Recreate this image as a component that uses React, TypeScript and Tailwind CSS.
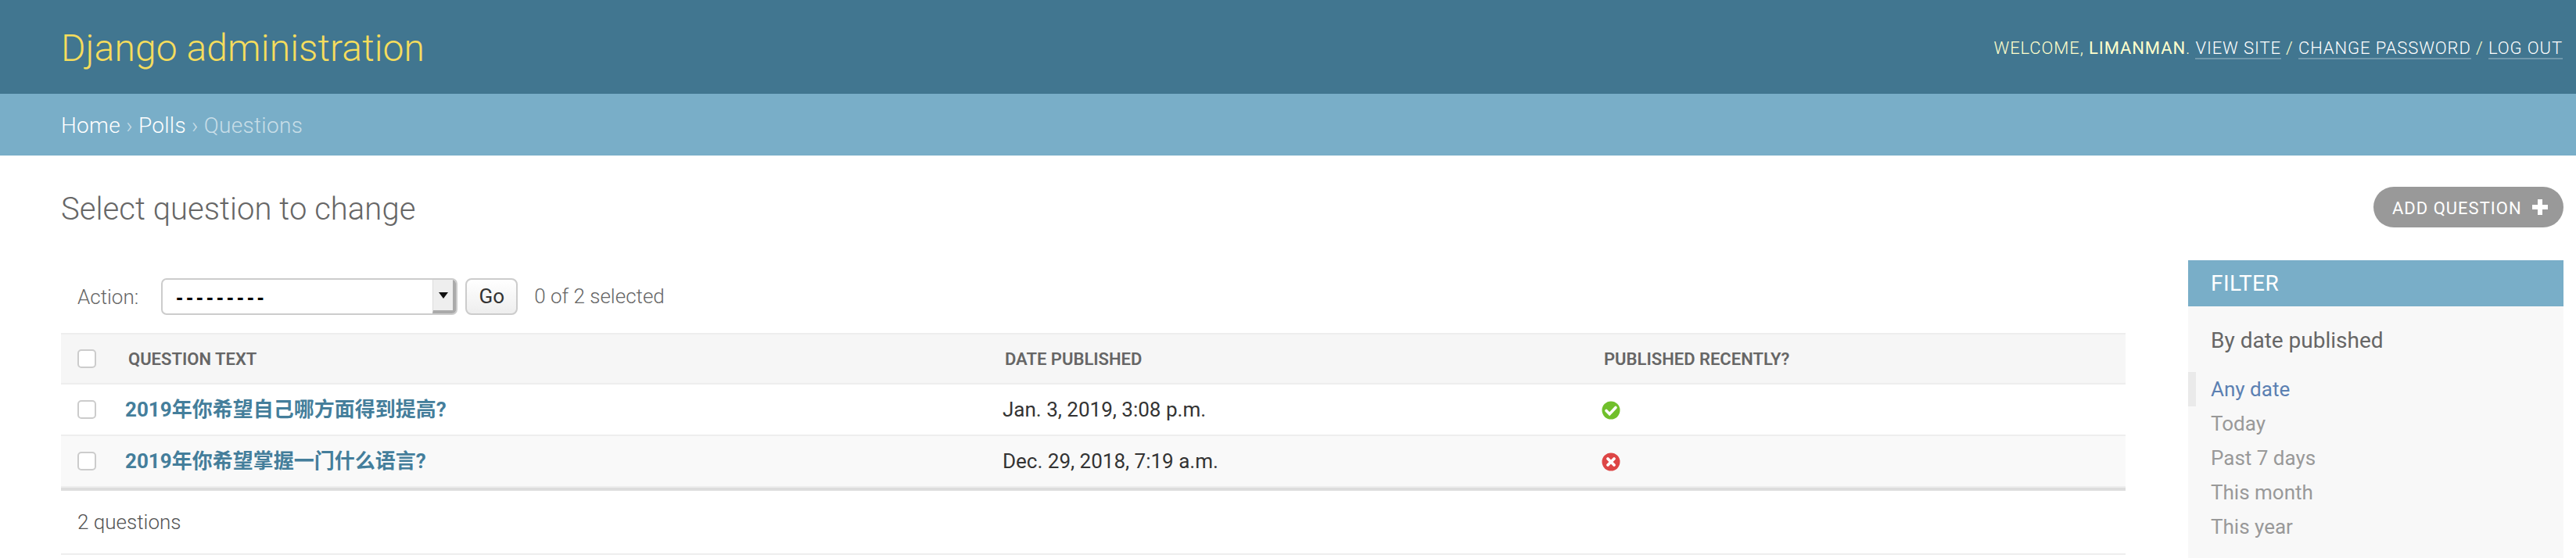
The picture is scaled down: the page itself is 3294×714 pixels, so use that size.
import React from "react";

const rows = [
  { question: "2019年你希望自己哪方面得到提高?", date: "Jan. 3, 2019, 3:08 p.m.", recent: true },
  { question: "2019年你希望掌握一门什么语言?", date: "Dec. 29, 2018, 7:19 a.m.", recent: false },
];

const filters = ["Today", "Past 7 days", "This month", "This year"];

const Check = () => (
  <input
    type="checkbox"
    className="block w-[24px] h-[24px] appearance-none rounded-[5px] border-2 border-[#cccccc] bg-white"
  />
);

const StatusIcon = ({ ok }: { ok: boolean }) => (
  <svg width="24" height="24" viewBox="0 0 24 24" className="block mt-[2px]">
    <circle cx="12" cy="12" r="11.5" fill={ok ? "#70bf2b" : "#dd4646"} />
    {ok ? (
      <path d="M6 12.5l4.2 4.2L18 8.5" fill="none" stroke="#fff" strokeWidth="3.6" strokeLinecap="round" />
    ) : (
      <path d="M8 8l8 8M16 8l-8 8" fill="none" stroke="#fff" strokeWidth="3.8" strokeLinecap="round" />
    )}
  </svg>
);

export default function App() {
  return (
    <div className="w-[3294px] h-[714px] overflow-hidden bg-white font-['Roboto','Noto_Sans_CJK_SC',sans-serif] text-[#333333]">
      {/* Header */}
      <header className="h-[120px] bg-[#417690] pl-[78px] pr-[17px] flex justify-between items-start">
        <h1 className="mt-[36px] text-[48px] leading-[52px] font-light tracking-[0.1px] text-[#f5dd5d]">Django administration</h1>
        <div className="mt-[46px] text-[22px] leading-[32px] font-light tracking-[0.9px] uppercase text-[#ffffcc] whitespace-nowrap">
          Welcome, <strong className="font-normal">liManman</strong>.{" "}
          <a className="text-white border-b-2 border-white/25">View site</a> /{" "}
          <a className="text-white border-b-2 border-white/25">Change password</a> /{" "}
          <a className="text-white border-b-2 border-white/25">Log out</a>
        </div>
      </header>

      {/* Breadcrumbs */}
      <nav className="h-[79px] bg-[#79aec8] pl-[78px] pt-[22px] text-[28px] leading-[38px] font-light tracking-[0.3px] text-white/60">
        <a className="text-white">Home</a> › <a className="text-white">Polls</a> › Questions
      </nav>

      <div className="pl-[78px] pr-[16px]">
        {/* Title row */}
        <div className="h-[134px] flex justify-between items-start">
          <h2 className="mt-[44px] text-[40px] leading-[50px] font-light tracking-[0.05px] text-[#666666]">Select question to change</h2>
          <a className="mt-[40px] h-[52px] w-[243px] rounded-[26px] bg-[#999999] pl-[24px] pt-[2px] flex items-center gap-[12px] text-[22px] font-normal tracking-[1px] uppercase text-white">
            Add question
            <svg width="22" height="22" viewBox="0 0 22 22" className="shrink-0 -mt-[2px]">
              <path d="M8 1h6v7h7v6h-7v7H8v-7H1V8h7z" fill="#fff" />
            </svg>
          </a>
        </div>

        <div className="flex gap-[80px]">
          {/* Changelist */}
          <main className="w-[2640px]">
            <div className="h-[93px] pl-[21px] flex items-start text-[26px] text-[#666666] font-light">
              <span className="mt-[31px] leading-[32px]">Action:</span>
              <div className="ml-[29px] mt-[23px] w-[379px] h-[47px] flex rounded-[7px] border-2 border-[#cccccc] bg-white overflow-hidden">
                <span className="flex-1 pl-[17px] font-['Liberation_Sans'] text-[26px] tracking-[4.3px] leading-[44px] text-black font-bold">---------</span>
                <span className="w-[30px] bg-[#eeeeee] border-r-[4px] border-b-[4px] border-l-[1px] border-r-[#aaaaaa] border-b-[#aaaaaa] border-l-[#dddddd] flex items-center justify-center">
                  <svg width="14" height="10" viewBox="0 0 14 10"><path d="M1 1h12L7 9z" fill="#111" /></svg>
                </span>
              </div>
              <button className="ml-[10px] mt-[23px] w-[67px] h-[47px] rounded-[8px] border-2 border-[#cccccc] bg-gradient-to-b from-white to-[#eeeeee] text-[26px] text-[#333333] font-normal">Go</button>
              <span className="ml-[21px] mt-[28px] leading-[36px] text-[#666666] font-light">0 of 2 selected</span>
            </div>

            <div className="h-[66px] flex items-center pl-[21px] bg-[#f6f6f6] border-y-2 border-[#eeeeee] text-[22px] font-semibold uppercase text-[#666666]">
              <Check />
              <span className="ml-[41px] w-[1121px]">Question text</span>
              <span className="w-[766px]">Date published</span>
              <span>Published recently?</span>
            </div>

            {rows.map((row, i) => (
              <div key={row.date} className={`h-[66px] flex items-center pl-[21px] border-b-2 border-[#eeeeee] text-[26px] ${i % 2 ? "bg-[#f9f9f9]" : "bg-white"}`}>
                <Check />
                <a className="ml-[37px] w-[1122px] font-bold text-[#447e9b]">{row.question}</a>
                <span className="w-[766px] text-[#333333]">{row.date}</span>
                <StatusIcon ok={row.recent} />
              </div>
            ))}

            <div className="h-[86px] border-t-[4px] border-b-2 border-t-[#dddddd] border-b-[#eeeeee] pl-[21px] flex items-center text-[26px] font-light text-[#555555]">
              2 questions
            </div>
          </main>

          {/* Filter */}
          <aside className="w-[480px] h-[381px] bg-[#f8f8f8] shrink-0">
            <h3 className="h-[59px] bg-[#79aec8] pl-[29px] flex items-center text-[28px] font-normal tracking-[0.5px] uppercase text-white">Filter</h3>
            <h4 className="pl-[29px] mt-[24px] text-[28px] leading-[40px] text-[#666666]">By date published</h4>
            <ul className="mt-[20px] text-[26px] leading-[44px] text-[#999999]">
              <li className="border-l-[10px] border-[#eaeaea] pl-[19px] text-[#5b80b2]">Any date</li>
              {filters.map((f) => (
                <li key={f} className="pl-[29px]">{f}</li>
              ))}
            </ul>
          </aside>
        </div>
      </div>
    </div>
  );
}
